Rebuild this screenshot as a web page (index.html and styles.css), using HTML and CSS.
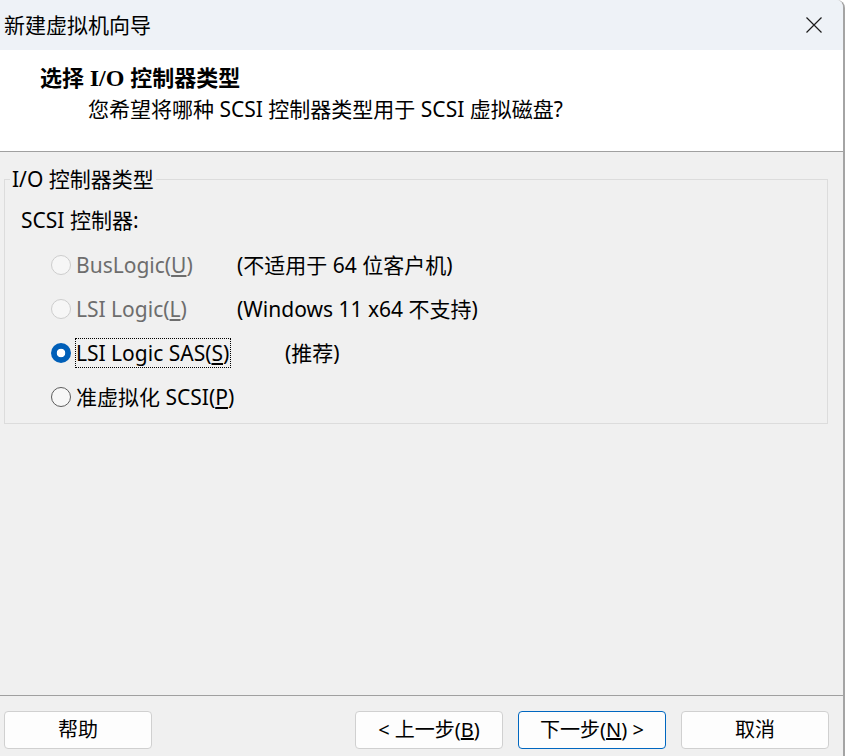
FILE: index.html
```html
<!DOCTYPE html>
<html lang="zh-CN">
<head>
<meta charset="utf-8">
<title>新建虚拟机向导</title>
<link rel="stylesheet" href="styles.css">
</head>
<body>
<div class="window">
  <div class="titlebar">
    <span class="title">新建虚拟机向导</span>
    <span class="close">
      <svg width="16" height="16" viewBox="0 0 16 16"><path d="M0.5 0.5 L15.5 15.5 M15.5 0.5 L0.5 15.5" stroke="#1b1b1b" stroke-width="1.2" fill="none"/></svg>
    </span>
  </div>
  <div class="header">
    <div class="h-title">选择 <span class="io">I/O</span> 控制器类型</div>
    <div class="h-sub">您希望将哪种 SCSI 控制器类型用于 SCSI 虚拟磁盘?</div>
  </div>
  <div class="body">
    <fieldset class="group">
      <legend class="group-legend">I/O 控制器类型</legend>
      <div class="group-label">SCSI 控制器:</div>
      <div class="row">
        <span class="radio radio-disabled"></span>
        <span class="label label-disabled">BusLogic(<u>U</u>)</span>
        <span class="desc">(不适用于 64 位客户机)</span>
      </div>
      <div class="row">
        <span class="radio radio-disabled"></span>
        <span class="label label-disabled">LSI Logic(<u>L</u>)</span>
        <span class="desc">(Windows 11 x64 不支持)</span>
      </div>
      <div class="row">
        <span class="radio radio-checked"></span>
        <span class="label label-wide"><span class="focus">LSI Logic SAS(<u>S</u>)</span></span>
        <span class="desc">(推荐)</span>
      </div>
      <div class="row">
        <span class="radio"></span>
        <span class="label">准虚拟化 SCSI(<u>P</u>)</span>
      </div>
    </fieldset>
  </div>
  <div class="footer">
    <button class="btn">帮助</button>
    <div class="spacer"></div>
    <button class="btn">&lt; 上一步(<u>B</u>)</button>
    <button class="btn btn-default">下一步(<u>N</u>) &gt;</button>
    <button class="btn">取消</button>
  </div>
</div>
</body>
</html>
```

FILE: styles.css
```css
html, body {
  margin: 0;
  padding: 0;
  background: #ffffff;
}
body {
  font-family: "Noto Sans", "Noto Sans CJK SC", sans-serif;
  font-size: 21px;
  color: #000;
}
.window {
  width: 843px;
  height: 756px;
  display: flex;
  flex-direction: column;
  border-right: 2px solid #a4a4a4;
  border-top-right-radius: 8px;
  overflow: hidden;
  background: #f0f0f0;
}
.titlebar {
  height: 50px;
  flex: none;
  background: #eef2f7;
  display: flex;
  align-items: center;
  padding-left: 4px;
}
.title {
  font-size: 21px;
  line-height: 28px;
  flex: 1;
}
.close {
  width: 16px;
  height: 16px;
  margin-right: 21px;
  display: flex;
}
.header {
  height: 102px;
  box-sizing: border-box;
  flex: none;
  background: #ffffff;
  border-bottom: 1px solid #a0a0a0;
}
.h-title {
  font-weight: bold;
  font-size: 22px;
  line-height: 28px;
  padding: 13px 0 0 40px;
}
.h-title .io {
  font-family: "Liberation Serif", serif;
  font-size: 24px;
}
.h-sub {
  line-height: 28px;
  padding: 3px 0 0 88px;
}
.body {
  flex: 1;
  padding: 15px 0 0 4px;
}
.group {
  width: 824px;
  box-sizing: border-box;
  margin: 0;
  padding: 0 0 4px 0;
  border: 1px solid #dcdcdc;
  min-width: 0;
}
.group-legend {
  margin-left: 5px;
  padding: 0 2px;
  line-height: 24px;
}
.group-label {
  margin-top: 17px;
  padding-left: 16px;
  line-height: 24px;
}
.row {
  height: 44px;
  display: flex;
  align-items: center;
  padding-left: 46px;
  line-height: 24px;
}
.group-label + .row {
  margin-top: 11px;
}
.radio {
  width: 20px;
  height: 20px;
  box-sizing: border-box;
  border-radius: 50%;
  border: 1px solid #5c5c5c;
  background: #f7f7f7;
  margin-right: 5px;
  flex: none;
}
.radio-disabled {
  border-color: #cdcdcd;
  background: #f6f6f6;
}
.radio-checked {
  border: none;
  background: radial-gradient(circle, #ffffff 0, #ffffff 4px, #005fb8 4.6px);
}
.label {
  width: 161px;
  flex: none;
  white-space: nowrap;
}
.label-wide {
  width: 209px;
}
.label-disabled {
  color: #6d6d6d;
}
.focus {
  border: 1px dotted #000;
  margin-left: -1px;
  padding: 0 1px 0 0;
}
.desc {
  white-space: nowrap;
}
.footer {
  height: 61px;
  box-sizing: border-box;
  flex: none;
  border-top: 1px solid #a0a0a0;
  display: flex;
  align-items: flex-start;
  padding: 15px 14px 0 4px;
  gap: 15px;
}
.spacer {
  flex: 1;
}
.btn {
  width: 148px;
  height: 38px;
  box-sizing: border-box;
  border: 1px solid #d0d0d0;
  border-radius: 4px;
  background: #fdfdfd;
  font-family: "Noto Sans", "Noto Sans CJK SC", sans-serif;
  font-size: 20px;
  color: #000;
  padding: 0;
  line-height: 24px;
}
.btn-default {
  border-color: #0067c0;
}
```
